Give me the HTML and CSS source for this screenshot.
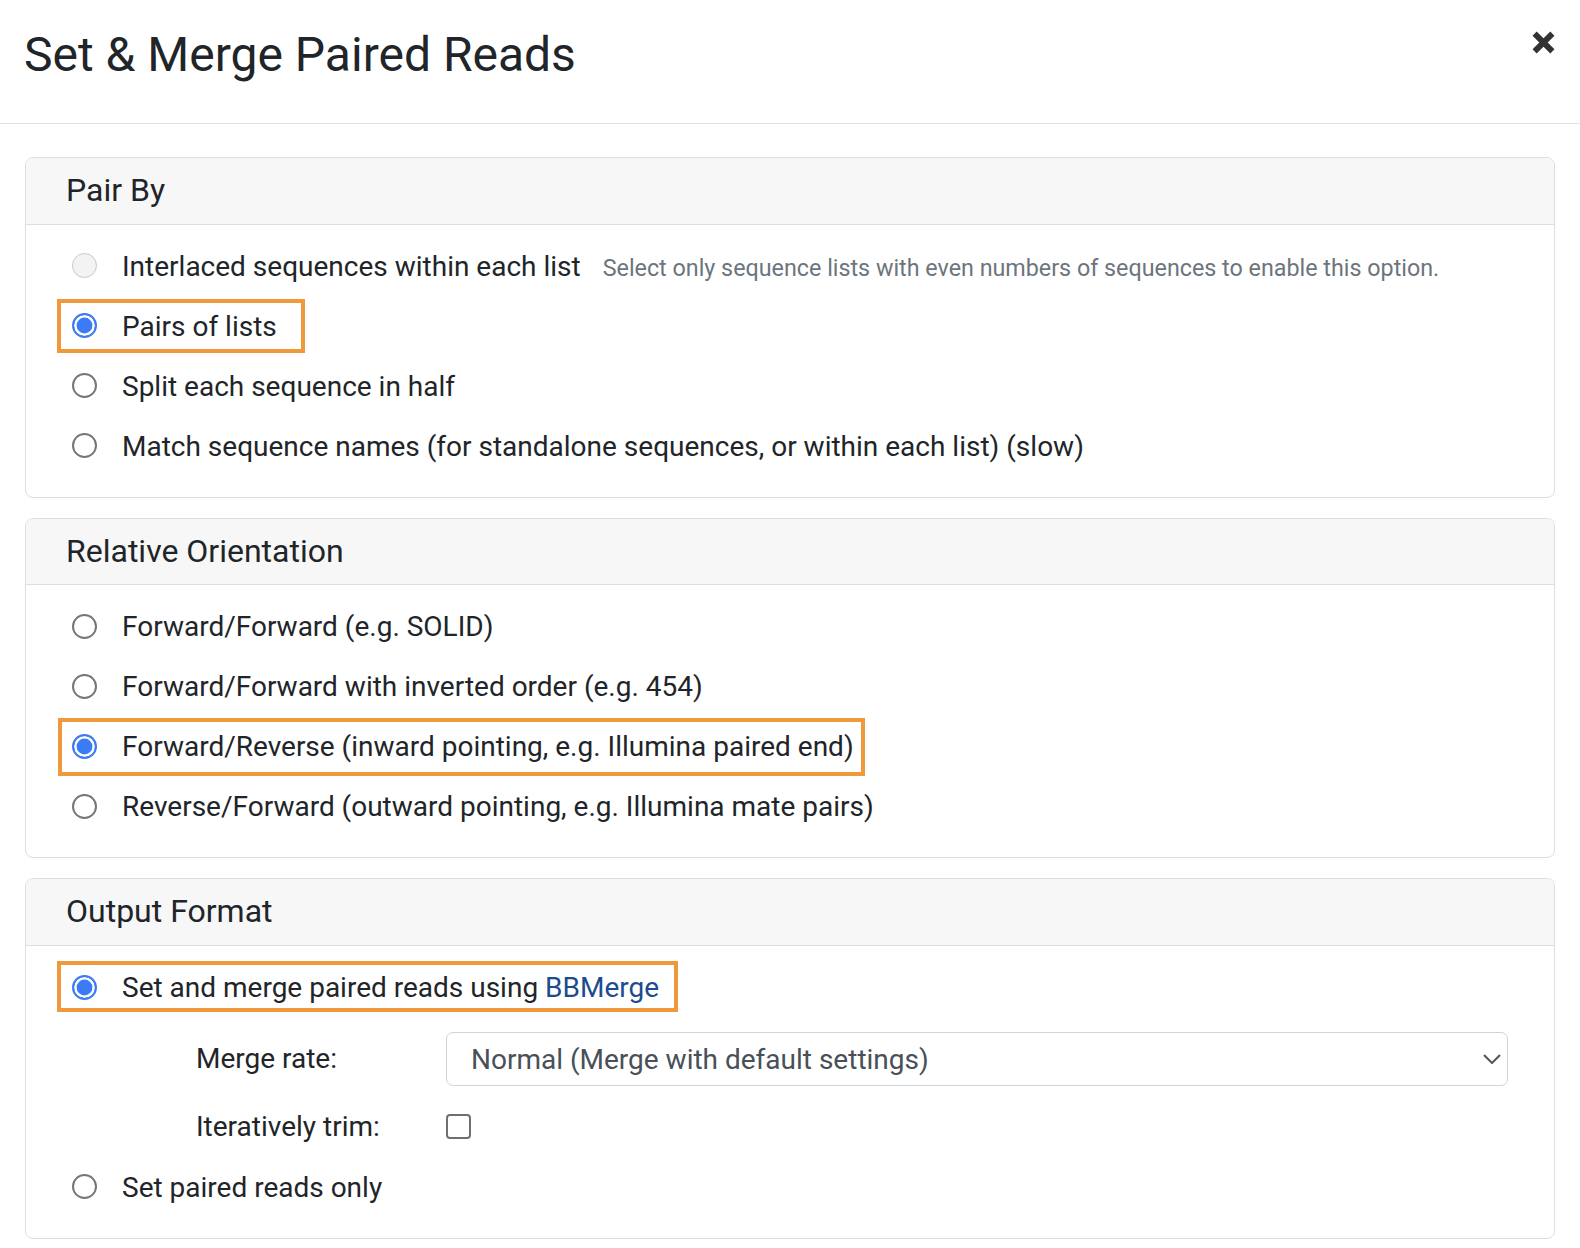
FILE: index.html
```html
<!DOCTYPE html>
<html lang="en">
<head>
<meta charset="utf-8">
<title>Set &amp; Merge Paired Reads</title>
<link rel="stylesheet" href="styles.css">
</head>
<body>
<div class="modal">
  <div class="modal-header">
    <h1 class="modal-title">Set &amp; Merge Paired Reads</h1>
    <button class="close" type="button" aria-label="Close">
      <svg width="23" height="23" viewBox="0 0 22 22"><path d="M2.5 2.5 L19.5 19.5 M19.5 2.5 L2.5 19.5" stroke="#333" stroke-width="5.6" stroke-linecap="butt" fill="none"/></svg>
    </button>
  </div>
  <div class="modal-body">
    <section class="panel">
      <div class="panel-header">Pair By</div>
      <div class="panel-body">
        <label class="option"><input type="radio" name="pair" disabled><span class="option-text">Interlaced sequences within each list<span class="hint">Select only sequence lists with even numbers of sequences to enable this option.</span></span></label>
        <label class="option highlight hl-pairs"><input type="radio" name="pair" checked><span class="option-text">Pairs of lists</span></label>
        <label class="option"><input type="radio" name="pair"><span class="option-text">Split each sequence in half</span></label>
        <label class="option"><input type="radio" name="pair"><span class="option-text">Match sequence names (for standalone sequences, or within each list) (slow)</span></label>
      </div>
    </section>
    <section class="panel">
      <div class="panel-header">Relative Orientation</div>
      <div class="panel-body">
        <label class="option"><input type="radio" name="orient"><span class="option-text">Forward/Forward (e.g. SOLID)</span></label>
        <label class="option"><input type="radio" name="orient"><span class="option-text">Forward/Forward with inverted order (e.g. 454)</span></label>
        <label class="option highlight hl-orient"><input type="radio" name="orient" checked><span class="option-text">Forward/Reverse (inward pointing, e.g. Illumina paired end)</span></label>
        <label class="option"><input type="radio" name="orient"><span class="option-text">Reverse/Forward (outward pointing, e.g. Illumina mate pairs)</span></label>
      </div>
    </section>
    <section class="panel">
      <div class="panel-header">Output Format</div>
      <div class="panel-body">
        <label class="option highlight hl-merge"><input type="radio" name="out" checked><span class="option-text">Set and merge paired reads using <a class="link" href="#">BBMerge</a></span></label>
        <div class="suboptions">
          <div class="field">
            <span class="field-label">Merge rate:</span>
            <div class="select-wrap">
              <select class="select">
                <option>Normal (Merge with default settings)</option>
              </select>
              <svg class="chevron" width="18" height="10" viewBox="0 0 18 10"><path d="M1 1 L9 9 L17 1" stroke="#555" stroke-width="2" fill="none"/></svg>
            </div>
          </div>
          <div class="field field-check">
            <span class="field-label">Iteratively trim:</span>
            <input type="checkbox" class="checkbox">
          </div>
        </div>
        <label class="option"><input type="radio" name="out"><span class="option-text">Set paired reads only</span></label>
      </div>
    </section>
  </div>
</div>
</body>
</html>
```

FILE: styles.css
```css
* { box-sizing: border-box; }

html, body {
  margin: 0;
  padding: 0;
  background: #fff;
}

body {
  font-family: Roboto, "Liberation Sans", Arial, sans-serif;
  font-size: 28px;
  line-height: 1.5;
  color: #212529;
}

.modal {
  width: 1580px;
}

.modal-header {
  display: flex;
  justify-content: space-between;
  align-items: flex-start;
  padding: 26px 25px 39.4px 24px;
  border-bottom: 1px solid #dee2e6;
}

.modal-title {
  margin: 0;
  font-size: 48px;
  font-weight: 400;
  line-height: 1.2;
  color: #212529;
}

.close {
  margin: 5px 0 0 0;
  padding: 0;
  border: 0;
  background: none;
  width: 23px;
  height: 23px;
  display: block;
  cursor: pointer;
}

.close svg { display: block; }

.modal-body {
  padding: 33px 25px 0;
}

.panel {
  border: 1px solid #dedede;
  border-radius: 8px;
  margin-bottom: 20px;
}

.panel-header {
  background: #f7f7f7;
  border-bottom: 1px solid #dedede;
  border-radius: 7px 7px 0 0;
  padding: 14px 40px;
  font-size: 32px;
  line-height: 1.18;
  color: #212529;
}

.panel-body {
  display: flex;
  flex-direction: column;
  gap: 18px;
  padding: 20px 46px 30px;
}

.option {
  position: relative;
  display: flex;
  align-items: center;
  width: fit-content;
  height: 42px;
  cursor: pointer;
}

.option input[type="radio"] {
  appearance: none;
  -webkit-appearance: none;
  flex: none;
  width: 25px;
  height: 25px;
  margin: 0;
  border: 2px solid #767676;
  border-radius: 50%;
  background: #fff;
}

.option input[type="radio"]:checked {
  border: 2.5px solid #3b7cf6;
  background: #3b7cf6;
  box-shadow: inset 0 0 0 2.6px #fff;
}

.option input[type="radio"]:disabled {
  border: 1.75px solid #c9c9c9;
  background: #f3f3f3;
}

.option-text {
  margin-left: 25px;
  padding-top: 2px;
  white-space: nowrap;
}

.hint {
  margin-left: 22px;
  font-size: 23.3px;
  color: #6c757d;
}

.link {
  color: #1c4c8f;
  text-decoration: none;
}

.highlight::after {
  content: "";
  position: absolute;
  border: 4.5px solid #f0993b;
  pointer-events: none;
}

.hl-pairs::after { top: -6px; bottom: -6px; left: -15px; right: -28px; }
.hl-orient::after { top: -7px; bottom: -9px; left: -14px; right: -11px; }
.hl-merge::after { top: -5px; bottom: -4px; left: -15px; right: -19px; }

.suboptions {
  display: flex;
  flex-direction: column;
  gap: 19.5px;
  margin-top: 6px;
  padding-left: 124px;
}

.field {
  display: flex;
  align-items: center;
}

.field-check {
  height: 42px;
}

.field-label {
  flex: none;
  width: 250px;
  color: #212529;
}

.select-wrap {
  position: relative;
  flex: 1;
}

.select {
  appearance: none;
  -webkit-appearance: none;
  display: block;
  width: 100%;
  height: 54px;
  margin: 0;
  padding: 0 50px 0 24px;
  border: 1.5px solid #ced4da;
  border-radius: 7px;
  background: #fff;
  font-family: Roboto, "Liberation Sans", Arial, sans-serif;
  font-size: 28px;
  color: #495057;
}

.chevron {
  position: absolute;
  right: 7px;
  top: 22px;
  pointer-events: none;
}

.checkbox {
  appearance: none;
  -webkit-appearance: none;
  width: 25px;
  height: 25px;
  margin: 0;
  border: 2px solid #6f6f6f;
  border-radius: 4px;
  background: #fff;
}
```
